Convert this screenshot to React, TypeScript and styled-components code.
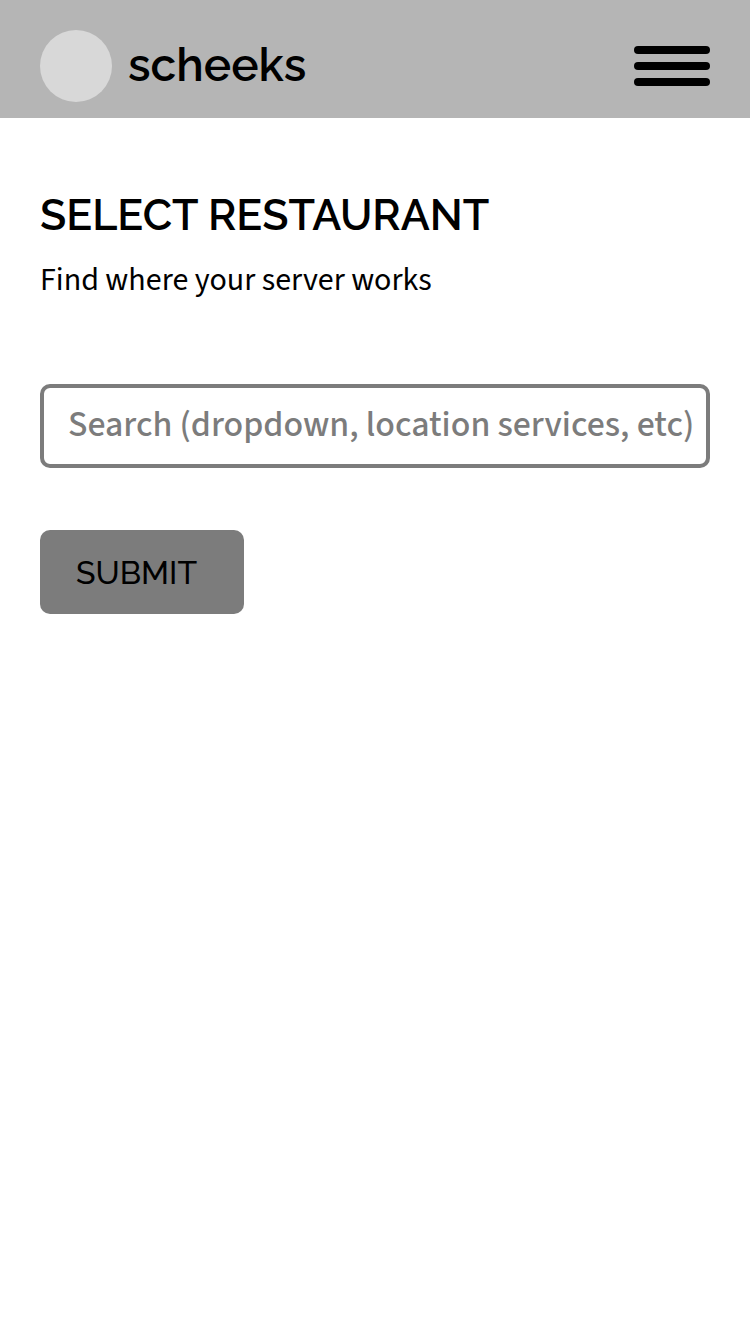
import React from "react";
import styled, { createGlobalStyle } from "styled-components";

const displayFont = `Raleway, Lato, "Liberation Sans", sans-serif`;
const bodyFont = `"Source Sans 3", "Source Sans Pro", "Noto Sans CJK SC", "Noto Sans", sans-serif`;

const GlobalStyle = createGlobalStyle`
  *, *::before, *::after {
    box-sizing: border-box;
  }
  body {
    margin: 0;
    background: #ffffff;
    color: #000000;
    font-family: ${bodyFont};
  }
`;

const Header = styled.header`
  display: flex;
  align-items: center;
  justify-content: space-between;
  padding: 30px 40px 16px;
  background: #b5b5b5;
`;

const Brand = styled.a`
  display: flex;
  align-items: center;
  gap: 16px;
  color: inherit;
  text-decoration: none;
`;

const Logo = styled.span`
  width: 72px;
  height: 72px;
  border-radius: 50%;
  background: #d8d8d8;
`;

const BrandName = styled.span`
  padding-bottom: 2px;
  font: 600 46px/70px ${displayFont};
`;

const MenuButton = styled.button`
  display: flex;
  flex-direction: column;
  gap: 8px;
  width: 76px;
  padding: 0;
  border: 0;
  background: none;
  cursor: pointer;
`;

const MenuBar = styled.span`
  width: 100%;
  height: 8px;
  border-radius: 4px;
  background: #000000;
`;

const Main = styled.main`
  padding: 72px 40px;
`;

const Title = styled.h1`
  margin: 0;
  font: 600 43px/50px ${displayFont};
  text-transform: uppercase;
`;

const Subtitle = styled.p`
  margin: 20px 0 0;
  font-size: 32px;
  line-height: 40px;
`;

const SearchForm = styled.form`
  display: flex;
  flex-direction: column;
  align-items: flex-start;
  gap: 62px;
  margin-top: 84px;
`;

const SearchInput = styled.input`
  width: 100%;
  height: 84px;
  padding: 0 8px 4px 24px;
  border: 4px solid #7c7c7c;
  border-radius: 10px;
  background: #ffffff;
  color: #000000;
  font: 500 36px/52px ${bodyFont};

  &::placeholder {
    color: #7c7c7c;
    opacity: 1;
  }
`;

const SubmitButton = styled.button`
  min-width: 204px;
  height: 84px;
  padding: 2px 36px 0;
  border: 0;
  border-radius: 10px;
  background: #7c7c7c;
  color: #000000;
  font: 500 32px/40px ${displayFont};
  text-align: left;
  text-transform: uppercase;
  cursor: pointer;
`;

export default function App() {
  return (
    <>
      <GlobalStyle />
      <Header>
        <Brand href="#">
          <Logo />
          <BrandName>scheeks</BrandName>
        </Brand>
        <MenuButton type="button" aria-label="Menu">
          <MenuBar />
          <MenuBar />
          <MenuBar />
        </MenuButton>
      </Header>
      <Main>
        <Title>Select Restaurant</Title>
        <Subtitle>Find where your server works</Subtitle>
        <SearchForm onSubmit={(event: React.FormEvent) => event.preventDefault()}>
          <SearchInput
            type="text"
            aria-label="Search restaurants"
            placeholder="Search (dropdown, location services, etc)"
          />
          <SubmitButton type="submit">Submit</SubmitButton>
        </SearchForm>
      </Main>
    </>
  );
}
